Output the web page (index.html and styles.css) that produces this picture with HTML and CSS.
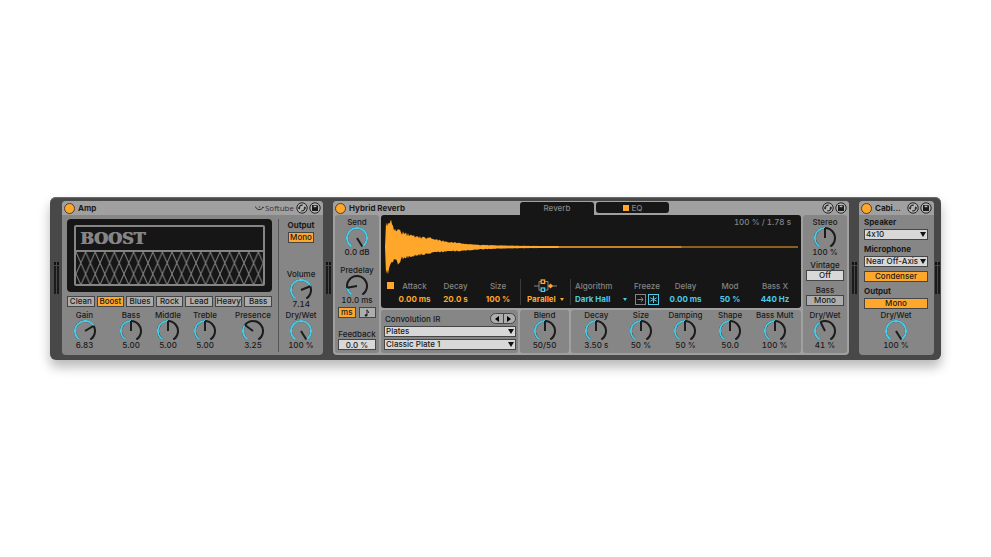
FILE: index.html
```
<!DOCTYPE html>
<html lang="en">
<head>
  <meta charset="UTF-8" />
  <meta name="viewport" content="width=device-width, initial-scale=1.0" />
  <title>Device Rack</title>
  <link rel="stylesheet" href="styles.css">
</head>
<body>
  <!-- shared icons -->
  <svg class="sprite" aria-hidden="true">
    <symbol id="swap" viewBox="0 0 12 12">
      <circle cx="6" cy="6" r="5.2" fill="#b4b4b4" stroke="#222" stroke-width="1" />
      <path d="M3.1 6.6A3 3 0 0 1 6.8 3.2M8.9 5.4A3 3 0 0 1 5.2 8.8" fill="none" stroke="#222" stroke-width="1.1" />
      <path d="M1.8 5.6h2.8L3.2 7.8zM10.2 6.4H7.4L8.8 4.2z" fill="#222" />
    </symbol>
    <symbol id="save" viewBox="0 0 12 12">
      <circle cx="6" cy="6" r="5.2" fill="#b4b4b4" stroke="#222" stroke-width="1" />
      <path d="M3 3h5.3L9 3.7V9H3z" fill="#1a1a1a" />
      <path d="M4.6 3.6h2.8v1.6H4.6z" fill="#b4b4b4" />
    </symbol>
  </svg>

  <main class="rack">
    <div class="meter"><i></i><i></i></div>

    <section class="device amp">
      <header>
        <button class="power" aria-label="Amp on"></button>
        <h2>Amp</h2>
        <span class="brand">
          <svg width="9" height="6" viewBox="0 0 9 6"><path d="M0.5 1.5C1.5 5.5 6 5.5 8 2.5M3.8 2h1.4M7 2.4h1.8" fill="none" stroke="#333" /></svg>
          Softube
        </span>
        <button class="icon" aria-label="Hot-swap"><svg><use href="#swap" /></svg></button>
        <button class="icon" aria-label="Save"><svg><use href="#save" /></svg></button>
      </header>
      <div class="amp-body">
        <div class="amp-main">
          <div class="screen">
            <div class="cabinet">
              <strong>BOOST</strong>
              <svg class="grille" width="100%" height="32">
                <defs>
                  <pattern id="mesh" width="9.6" height="22" patternUnits="userSpaceOnUse">
                    <path d="M0 0L9.6 22M9.6 0L0 22" fill="none" stroke="#858585" stroke-width="1" />
                  </pattern>
                </defs>
                <rect width="100%" height="100%" fill="url(#mesh)" />
              </svg>
            </div>
          </div>
          <div class="models">
            <button class="btn">Clean</button>
            <button class="btn on">Boost</button>
            <button class="btn">Blues</button>
            <button class="btn">Rock</button>
            <button class="btn">Lead</button>
            <button class="btn">Heavy</button>
            <button class="btn">Bass</button>
          </div>
          <div class="amp-knobs">
            <label class="knob gain">Gain<input type="range" min="0" max="100" value="70"><output>6.83</output></label>
            <div class="tone">
              <label class="knob">Bass<input type="range" min="0" max="100" value="50"><output>5.00</output></label>
              <label class="knob">Middle<input type="range" min="0" max="100" value="50"><output>5.00</output></label>
              <label class="knob">Treble<input type="range" min="0" max="100" value="50"><output>5.00</output></label>
            </div>
            <label class="knob presence">Presence<input type="range" min="0" max="100" value="32"><output>3.25</output></label>
          </div>
        </div>
        <div class="amp-out">
          <h3>Output</h3>
          <button class="btn on">Mono</button>
          <label class="knob push">Volume<input type="range" min="0" max="100" value="73"><output>7.14</output></label>
          <label class="knob">Dry/Wet<input type="range" min="0" max="100" value="100"><output>100 %</output></label>
        </div>
      </div>
    </section>

    <div class="meter"><i></i><i></i></div>

    <section class="device reverb">
      <header>
        <button class="power" aria-label="Hybrid Reverb on"></button>
        <h2>Hybrid Reverb</h2>
        <nav class="tabs">
          <button class="tab active">Reverb</button>
          <button class="tab"><i class="led"></i>EQ</button>
        </nav>
        <button class="icon" aria-label="Hot-swap"><svg><use href="#swap" /></svg></button>
        <button class="icon" aria-label="Save"><svg><use href="#save" /></svg></button>
      </header>
      <div class="reverb-body">
        <div class="panel side">
          <label class="knob">Send<input type="range" min="0" max="100" value="100"><output>0.0 dB</output></label>
          <label class="knob predelay">Predelay<input type="range" min="0" max="100" value="16"><output>10.0 ms</output></label>
          <div class="sync">
            <button class="btn on">ms</button>
            <button class="btn" aria-label="Note values"><svg width="6" height="8" viewBox="0 0 6 8"><path d="M3 6.5V0.8C3.4 2.2 5 2.4 4.6 4" fill="none" stroke="#1a1a1a" stroke-width="0.9" /><ellipse cx="2" cy="6.4" rx="1.4" ry="1.1" fill="#1a1a1a" /></svg></button>
          </div>
          <label class="field push">Feedback<input class="value" type="text" value="0.0 %"></label>
        </div>

        <div class="center">
          <div class="display">
            <p class="info">100 % / 1.78 s</p>
            <svg class="wave" viewBox="0 0 413 60" preserveAspectRatio="none">
              <path id="wave" fill="#ffa72b" />
            </svg>
            <div class="params">
              <button class="led" aria-label="Envelope"></button>
              <div class="param">Attack<b>0.00 ms</b></div>
              <div class="param">Decay<b>20.0 s</b></div>
              <div class="param">Size<b>100 %</b></div>
              <div class="param routing">
                <svg width="24" height="14" viewBox="0 0 24 14">
                  <path d="M0 7h5M5 2.5v9M5 2.5h2M5 11h2M11 2.5h3v8.5h-3M14 7h9" fill="none" stroke="#858585" />
                  <rect x="7.2" y="1" width="3.4" height="3.4" fill="none" stroke="#ffa72b" stroke-width="1.3" />
                  <rect x="7.2" y="9" width="3.4" height="3.4" fill="none" stroke="#4bcbe6" stroke-width="1.3" />
                  <path d="M16.5 4.5L19 7l-2.5 2.5L14 7z" fill="#ffa72b" />
                </svg>
                <span class="pick"><select aria-label="Routing"><option>Parallel</option></select></span>
              </div>
              <div class="param algorithm blue">Algorithm
                <span class="pick"><select aria-label="Algorithm"><option>Dark Hall</option></select></span>
              </div>
              <div class="param">Freeze
                <div class="freeze">
                  <button aria-label="Freeze in"><svg width="9" height="9" viewBox="0 0 9 9"><path d="M1.5 4.5h5.5M4.8 2.2l2.4 2.3-2.4 2.3" fill="none" stroke="currentColor" /></svg></button>
                  <button class="lit" aria-label="Freeze"><svg width="9" height="9" viewBox="0 0 9 9"><path d="M4.5 1v7M1.3 2.8l6.4 3.4M7.7 2.8L1.3 6.2" fill="none" stroke="currentColor" /></svg></button>
                </div>
              </div>
              <div class="param blue">Delay<b>0.00 ms</b></div>
              <div class="param blue">Mod<b>50 %</b></div>
              <div class="param blue">Bass X<b>440 Hz</b></div>
            </div>
          </div>
          <div class="lower">
            <div class="panel convolution">
              <div class="conv-head">
                <h4>Convolution IR</h4>
                <div class="pager">
                  <button aria-label="Previous"><svg width="4" height="6"><path d="M4 0v6L0 3z" /></svg></button>
                  <button aria-label="Next"><svg width="4" height="6"><path d="M0 0v6l4-3z" /></svg></button>
                </div>
              </div>
              <span class="drop"><select aria-label="IR category"><option>Plates</option></select></span>
              <span class="drop"><select aria-label="IR"><option>Classic Plate 1</option></select></span>
            </div>
            <div class="panel blend">
              <label class="knob">Blend<input type="range" min="0" max="100" value="50"><output>50/50</output></label>
            </div>
            <div class="panel algo-knobs">
              <label class="knob">Decay<input type="range" min="0" max="100" value="50"><output>3.50 s</output></label>
              <label class="knob">Size<input type="range" min="0" max="100" value="50"><output>50 %</output></label>
              <label class="knob">Damping<input type="range" min="0" max="100" value="50"><output>50 %</output></label>
              <label class="knob">Shape<input type="range" min="0" max="100" value="50"><output>50.0</output></label>
              <label class="knob">Bass Mult<input type="range" min="0" max="100" value="50"><output>100 %</output></label>
            </div>
          </div>
        </div>

        <div class="panel side">
          <label class="knob">Stereo<input type="range" min="0" max="100" value="50"><output>100 %</output></label>
          <h4 id="vintage">Vintage</h4>
          <button class="btn value" aria-describedby="vintage">Off</button>
          <h4 id="bass" class="bass">Bass</h4>
          <button class="btn" aria-describedby="bass">Mono</button>
          <label class="knob push">Dry/Wet<input type="range" min="0" max="100" value="41"><output>41 %</output></label>
        </div>
      </div>
    </section>

    <div class="meter"><i></i><i></i></div>

    <section class="device">
      <header>
        <button class="power" aria-label="Cabinet on"></button>
        <h2>Cabi...</h2>
        <button class="icon" aria-label="Hot-swap"><svg><use href="#swap" /></svg></button>
        <button class="icon" aria-label="Save"><svg><use href="#save" /></svg></button>
      </header>
      <div class="cab-body">
        <label for="speaker">Speaker</label>
        <span class="drop"><select id="speaker"><option>4x10</option></select></span>
        <label for="mic">Microphone</label>
        <span class="drop"><select id="mic"><option>Near Off-Axis</option></select></span>
        <button class="btn on condenser">Condenser</button>
        <h3>Output</h3>
        <button class="btn on">Mono</button>
        <div class="cab-knob push">
          <label class="knob">Dry/Wet<input type="range" min="0" max="100" value="100"><output>100 %</output></label>
        </div>
      </div>
    </section>

    <div class="meter"><i></i><i></i></div>
  </main>
  <script src="script.js"></script>
</body>
</html>
```
FILE: styles.css
```
* {
  box-sizing: border-box;
}
body {
  margin: 0;
  min-height: 100vh;
  padding: 0 50px;
  display: flex;
  align-items: center;
  background: #fff;
  color: #1a1a1a;
  font: 500 8px/10px Inter, sans-serif;
  font-feature-settings: "calt" 0;
}
h2, h3, h4, p {
  margin: 0;
  font-size: 8px;
  line-height: 10px;
}
h2, h3 {
  font-weight: 700;
}
h4, p {
  font-weight: 500;
}
button, input, select {
  margin: 0;
  padding: 0;
  border: none;
  border-radius: 0;
  background: none;
  color: inherit;
  font: inherit;
  font-feature-settings: inherit;
}
select {
  appearance: none;
}
svg {
  display: block;
}
.sprite {
  position: absolute;
  width: 0;
  height: 0;
}
.push {
  margin-top: auto;
}

/* rack */
.rack {
  flex: 1;
  display: grid;
  grid-template-columns: 12px 261fr 10px 516fr 10px 75fr 7px;
  padding: 4px 0 5px;
  background: #484848;
  border-radius: 6px;
  box-shadow: inset 0 1px 0 #6c6c6c, 0 7px 12px rgba(0, 0, 0, 0.28);
}
.meter {
  display: flex;
  justify-content: center;
  gap: 1px;
  padding: 61px 0;
}
.meter i {
  width: 2px;
  background: linear-gradient(#111 3px, #484848 3px, #484848 4px, #1a1a1a 4px);
}
.device {
  display: flex;
  flex-direction: column;
  min-width: 0;
  background: #868686;
  border-radius: 4px;
}
.device header {
  display: flex;
  align-items: center;
  gap: 1px;
  height: 14px;
  padding: 0 2px;
  background: #a0a0a0;
  border-radius: 4px 4px 0 0;
}
.device header h2 {
  flex: 1;
  padding-left: 2px;
}
.power {
  width: 11px;
  height: 11px;
  background: #ffa72b;
  border: 1px solid #4a4030;
  border-radius: 50%;
}
.icon svg {
  width: 12px;
  height: 12px;
}
.brand {
  display: flex;
  align-items: center;
  gap: 1px;
  margin-right: 1px;
  color: #333;
  font: 8px/10px "Open Sans", sans-serif;
}

/* controls */
.btn {
  display: flex;
  align-items: center;
  justify-content: center;
  width: 100%;
  height: 11px;
  background: #adadad;
  border: 1px solid #454545;
  line-height: 9px;
}
.on {
  background: #ffa72b;
}
.value {
  height: 11px;
  background: #d8d8d8;
  border: 1px solid #454545;
  text-align: center;
}
.knob {
  position: relative;
  display: flex;
  flex-direction: column;
  align-items: center;
  height: 39px;
  line-height: 9px;
  white-space: nowrap;
}
.knob svg {
  width: 22px;
  height: 20px;
}
.knob path {
  fill: none;
  stroke: #1c1c1c;
  stroke-width: 2;
}
.knob .fill {
  stroke: #4bcbe6;
}
.knob input {
  position: absolute;
  top: 9px;
  width: 22px;
  height: 20px;
  opacity: 0;
}
.knob output {
  line-height: 10px;
  font-variant-numeric: tabular-nums;
}
.drop {
  position: relative;
  display: block;
}
.drop select {
  display: block;
  width: 100%;
  height: 11px;
  padding-left: 1px;
  background: #d8d8d8;
  border: 1px solid #454545;
  line-height: 9px;
}
.drop::after {
  content: "";
  position: absolute;
  top: 3px;
  right: 2px;
  border: 3px solid transparent;
  border-top: 5px solid #111;
  border-bottom: 0;
  pointer-events: none;
}
.led {
  width: 7px;
  height: 7px;
  background: #ffa72b;
}

/* amp */
.amp-body {
  flex: 1;
  display: flex;
  padding: 4px 0 3px 5px;
}
.amp-main {
  flex: 1;
  padding-right: 6px;
}
.screen {
  height: 73px;
  padding: 6px 7px;
  background: #161616;
  border-radius: 4px;
}
.cabinet {
  height: 61px;
  border: 2px solid #858585;
  border-radius: 2px;
}
.cabinet strong {
  display: block;
  height: 25px;
  padding-left: 4px;
  border-bottom: 2px solid #858585;
  color: #858585;
  font: 700 16px/24px "DejaVu Serif", serif;
  text-shadow: 1px 0 #858585;
}
.models {
  display: grid;
  grid-template-columns: repeat(7, 1fr);
  gap: 2px;
  margin: 4px 0;
}
.amp-knobs {
  display: flex;
  justify-content: space-between;
}
.tone {
  display: grid;
  grid-template-columns: repeat(3, 37px);
}
.gain {
  width: 35px;
}
.presence {
  width: 38px;
}
.amp-out {
  display: flex;
  flex-direction: column;
  align-items: center;
  gap: 2px;
  width: 45px;
  padding: 1px 0 2px;
  border-left: 1px solid #555;
}
.amp-out .btn {
  width: 26px;
}

/* hybrid reverb */
.reverb {
  background: #a0a0a0;
}
.tabs {
  display: flex;
  gap: 2px;
  align-self: stretch;
  margin-right: 152px;
  padding-top: 1px;
}
.tab {
  display: flex;
  align-items: center;
  justify-content: center;
  gap: 3px;
  width: 73px;
  height: 11px;
  background: #161616;
  border-radius: 3px;
  color: #858585;
}
.tab.active {
  height: 13px;
  width: 74px;
  padding-bottom: 2px;
  border-radius: 3px 3px 0 0;
}
.tab .led {
  width: 6px;
  height: 6px;
}
.reverb-body {
  display: grid;
  grid-template-columns: 44px 1fr 44px;
  gap: 2px;
  padding: 0 2px 2px;
}
.panel {
  background: #868686;
  border-radius: 3px;
}
.side {
  display: flex;
  flex-direction: column;
  height: 138px;
  padding: 3px 3px;
}
.side h4 {
  margin-top: 3px;
  text-align: center;
}
.side .bass {
  margin-top: 4px;
}
.predelay {
  margin-top: 9px;
}
.sync {
  display: grid;
  grid-template-columns: 1fr 1fr;
  gap: 3px;
  margin-top: 2px;
}
.field {
  display: flex;
  flex-direction: column;
  align-items: center;
}
.field input {
  width: 100%;
}
.center {
  display: flex;
  flex-direction: column;
  gap: 2px;
  min-width: 0;
}
.display {
  height: 93px;
  padding-top: 2px;
  background: #161616;
  border-radius: 3px;
  color: #858585;
}
.info {
  height: 0;
  padding-right: 10px;
  text-align: right;
  font-variant-numeric: tabular-nums;
}
.wave {
  width: calc(100% - 7px);
  height: 60px;
  margin-left: 4px;
}
.params {
  display: grid;
  grid-template-columns: 13fr 41fr 41fr 44fr 50fr 60fr 34fr 43fr 46fr 44fr 4fr;
  height: 26px;
  margin-top: 2px;
}
.params .led {
  margin: 3px 0 0 6px;
}
.param {
  display: flex;
  flex-direction: column;
  align-items: center;
  gap: 3px;
  padding-top: 2px;
  white-space: nowrap;
}
.param b, .param select {
  color: #ffa72b;
  font-weight: 700;
}
.blue b, .blue select {
  color: #4bcbe6;
}
.pick {
  position: relative;
  padding-right: 8px;
}
.pick select {
  display: block;
  height: 10px;
}
.pick::after {
  content: "";
  position: absolute;
  top: 4px;
  right: 0;
  border: 2px solid transparent;
  border-top: 3px solid #ffa72b;
  border-bottom: 0;
  pointer-events: none;
}
.blue .pick::after {
  border-top-color: #4bcbe6;
}
.routing {
  gap: 1px;
  padding-top: 0;
  border-left: 1px solid #3c3c3c;
}
.algorithm {
  align-items: stretch;
  padding-left: 4px;
  border-left: 1px solid #3c3c3c;
}
.algorithm .pick {
  margin-right: 3px;
}
.freeze {
  display: flex;
  gap: 2px;
}
.freeze button {
  border: 1px solid #858585;
}
.freeze .lit {
  border-color: #4bcbe6;
  color: #4bcbe6;
}
.lower {
  display: grid;
  grid-template-columns: 137fr 49fr 230fr;
  gap: 2px;
  flex: 1;
}
.convolution {
  display: flex;
  flex-direction: column;
  gap: 2px;
  padding: 3px 2px 0 3px;
}
.conv-head {
  display: flex;
  align-items: center;
  justify-content: space-between;
  height: 11px;
  padding-left: 1px;
}
.pager {
  display: flex;
  width: 26px;
  height: 11px;
  background: #adadad;
  border: 1px solid #454545;
  border-radius: 6px;
}
.pager button {
  flex: 1;
  display: flex;
  align-items: center;
  justify-content: center;
}
.pager button + button {
  border-left: 1px solid #454545;
}
.blend {
  padding-top: 1px;
}
.algo-knobs {
  display: grid;
  grid-template-columns: repeat(5, 1fr);
  padding: 1px 4px 0 3px;
}

/* cabinet */
.cab-body {
  flex: 1;
  display: flex;
  flex-direction: column;
  padding: 3px 6px 5px 5px;
}
.cab-body > label, .cab-body h3 {
  font-weight: 700;
  line-height: 9px;
  margin-bottom: 2px;
}
.cab-body .drop {
  margin-bottom: 5px;
}
.cab-body .condenser {
  margin: -1px 0 5px;
}
```
FILE: script.js
```
// point on a knob's circle, 0 degrees is straight up
function point(angle, r) {
  const a = angle * Math.PI / 180;
  return (Math.sin(a) * r).toFixed(2) + ' ' + (-Math.cos(a) * r).toFixed(2);
}

function arc(from, to) {
  const large = to - from > 180 ? 1 : 0;
  return 'M' + point(from, 10) + 'A10 10 0 ' + large + ' 1 ' + point(to, 10);
}

function drawKnob(input) {
  const angle = -148 + input.value / 100 * 296;
  input.previousElementSibling.innerHTML =
    '<path d="' + arc(-148, 148) + '"/>' +
    '<path class="fill" d="' + arc(-148, angle) + '"/>' +
    '<path d="M0 0L' + point(angle, 10) + '"/>';
}

document.querySelectorAll('.knob input').forEach((input) => {
  const svg = document.createElementNS('http://www.w3.org/2000/svg', 'svg');
  svg.setAttribute('viewBox', '-11 -11 22 20');
  input.before(svg);
  drawKnob(input);
  input.addEventListener('input', () => drawKnob(input));
});

// impulse response: [x, height] of the envelope above and below the centre
const upper = [[0, 0], [1, 26], [3, 22], [6, 26], [8, 19], [12, 18], [17, 14], [27, 11], [40, 9], [48, 9], [57, 6], [67, 5], [80, 3], [97, 2], [130, 1.2], [180, 0.8], [413, 0.5]];
const lower = [[0, 0], [1, 28], [3, 25], [6, 15], [10, 13], [13, 17], [17, 11], [27, 9], [40, 7], [53, 5], [73, 4], [100, 2], [130, 1.2], [180, 0.8], [413, 0.5]];

function envelope(env, x) {
  const i = Math.max(1, env.findIndex((p) => p[0] >= x));
  const [x0, h0] = env[i - 1];
  const [x1, h1] = env[i];
  const h = h0 + (h1 - h0) * (x - x0) / (x1 - x0);
  const noise = Math.abs(Math.sin(x * 12.9) * 43.7) % 1;
  return h > 1 ? h * (0.85 + noise * 0.3) : h;
}

let topEdge = '';
let bottomEdge = '';
for (let x = 0; x <= 413; x++) {
  topEdge += 'L' + x + ' ' + (30 - envelope(upper, x)).toFixed(1);
  bottomEdge = 'L' + x + ' ' + (30 + envelope(lower, x)).toFixed(1) + bottomEdge;
}
document.getElementById('wave').setAttribute('d', 'M0 30' + topEdge + bottomEdge + 'Z');
```
